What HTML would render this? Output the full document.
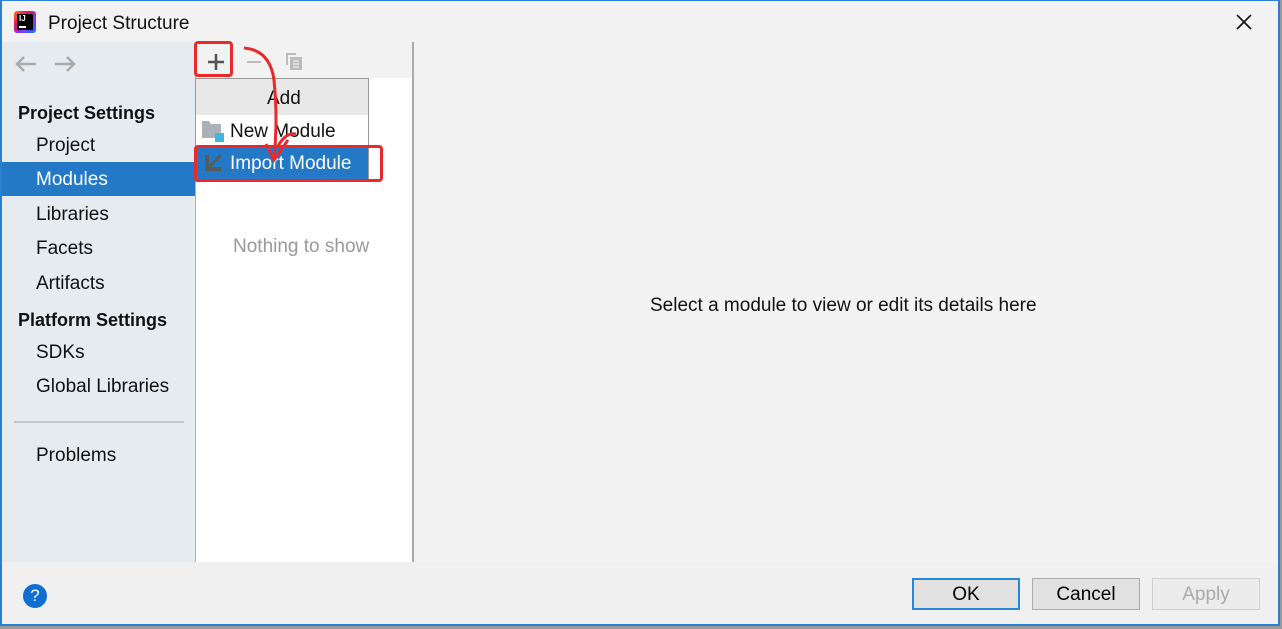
<!DOCTYPE html>
<html><head><style>
*{margin:0;padding:0;box-sizing:border-box}
body{width:1282px;height:629px;background:#9a9a9a;font-family:"Liberation Sans",sans-serif;position:relative;overflow:hidden}
#win{position:absolute;left:0;top:0;width:1280px;height:626px;background:#f2f2f2}
.a{position:absolute}
.t{font-size:19px;color:#111;white-space:nowrap;margin-top:1px}
.b{font-weight:bold;font-size:18px}
</style></head><body>
<div id="win">
 <div class="a" style="left:14px;top:11px;width:22px;height:22px">
  <div class="a" style="left:0;top:0;width:22px;height:22px;background:linear-gradient(135deg,#f97a12,#e3145c,#7b3cf2,#087cfa);border-radius:3px"></div>
  <div class="a" style="left:3px;top:3px;width:16px;height:16px;background:#000"></div>
  <div class="a" style="left:5px;top:3px;color:#fff;font-size:8px;font-weight:bold">IJ</div>
  <div class="a" style="left:5px;top:15px;width:7px;height:2px;background:#fff"></div>
 </div>
 <div class="a t" style="left:48px;top:12px">Project Structure</div>
 <svg class="a" style="left:1236px;top:14px" width="16" height="16"><path d="M1 1L15 15M15 1L1 15" stroke="#111" stroke-width="1.6"/></svg>

 <div class="a" style="left:2px;top:42px;width:193px;height:520px;background:#e6ebf0"></div>
 <svg class="a" style="left:15px;top:56px" width="22" height="16"><path d="M21 8H2M9 1L2 8L9 15" stroke="#aaa" stroke-width="2.4" fill="none"/></svg>
 <svg class="a" style="left:54px;top:56px" width="22" height="16"><path d="M1 8H20M13 1L20 8L13 15" stroke="#aaa" stroke-width="2.4" fill="none"/></svg>
 <div class="a t b" style="left:18px;top:102px">Project Settings</div>
 <div class="a t" style="left:36px;top:134px">Project</div>
 <div class="a" style="left:2px;top:162px;width:193px;height:34px;background:#2379c6"></div>
 <div class="a t" style="left:36px;top:168px;color:#fff">Modules</div>
 <div class="a t" style="left:36px;top:203px">Libraries</div>
 <div class="a t" style="left:36px;top:237px">Facets</div>
 <div class="a t" style="left:36px;top:272px">Artifacts</div>
 <div class="a t b" style="left:18px;top:309px">Platform Settings</div>
 <div class="a t" style="left:36px;top:341px">SDKs</div>
 <div class="a t" style="left:36px;top:375px">Global Libraries</div>
 <div class="a" style="left:14px;top:421px;width:170px;height:2px;background:#c4c6c8"></div>
 <div class="a t" style="left:36px;top:444px">Problems</div>

 <div class="a" style="left:195px;top:42px;width:1px;height:520px;background:#b0b0b0"></div>
 <div class="a" style="left:196px;top:78px;width:216px;height:484px;background:#fff"></div>
 <div class="a" style="left:412px;top:42px;width:2px;height:520px;background:#aaa"></div>
 <svg class="a" style="left:207px;top:53px" width="18" height="18"><path d="M9 1V17M1 9H17" stroke="#555" stroke-width="2.6"/></svg>
 <div class="a" style="left:247px;top:61px;width:14px;height:2px;background:#bbb"></div>
 <svg class="a" style="left:284px;top:51px" width="20" height="20"><path d="M2 2H12V4H4V14H2Z" fill="#bbb"/><path d="M6 6H18V19H6Z" fill="#bbb"/><path d="M9 10H15M9 13H15M9 16H15" stroke="#eee" stroke-width="1.3"/></svg>
 <div class="a" style="left:194px;top:41px;width:39px;height:36px;border:3px solid #ea2a2a;border-radius:4px"></div>

 <div class="a" style="left:195px;top:78px;width:174px;height:104px;border:1px solid #999;background:#fff"></div>
 <div class="a" style="left:196px;top:79px;width:172px;height:36px;background:#e8e8e8"></div>
 <div class="a t" style="left:267px;top:87px">Add</div>
 <svg class="a" style="left:201px;top:120px" width="24" height="24"><path d="M1 1H8L10 4H20V18H1Z" fill="#aab2b9"/><rect x="14" y="13" width="9" height="9" fill="#40b6e0"/></svg>
 <div class="a t" style="left:230px;top:120px">New Module</div>
 <div class="a" style="left:196px;top:147px;width:172px;height:33px;background:#2379c6"></div>
 <svg class="a" style="left:202px;top:152px" width="22" height="22"><path d="M3 3V19H19V15H7V3Z" fill="#5a5a5a"/><path d="M8 14L19 3" stroke="#5a5a5a" stroke-width="3"/></svg>
 <div class="a t" style="left:230px;top:152px;color:#fff">Import Module</div>
 <div class="a" style="left:194px;top:145px;width:189px;height:37px;border:3px solid #ea2a2a;border-radius:4px"></div>
 <svg class="a" style="left:230px;top:40px" width="80" height="130"><path d="M14 8 Q40 10 44 40 Q48 80 44 118 M36 104 L44 120 L58 100 M48 106 Q56 92 66 94" stroke="#ea2a2a" stroke-width="3" fill="none"/></svg>

 <div class="a" style="left:233px;top:236px;font-size:19px;color:#999">Nothing to show</div>
 <div class="a t" style="left:650px;top:294px">Select a module to view or edit its details here</div>

 <div class="a" style="left:2px;top:562px;width:1276px;height:62px;background:#f0f0f0"></div>
 <div class="a" style="left:23px;top:584px;width:24px;height:24px;border-radius:50%;background:#0f6fd0;color:#fff;font-size:17px;text-align:center;line-height:24px">?</div>
 <div class="a" style="left:912px;top:578px;width:108px;height:32px;border:2px solid #2a86d8;background:#e1e1e1;font-size:19px;text-align:center;line-height:29px">OK</div>
 <div class="a" style="left:1032px;top:578px;width:108px;height:32px;border:1px solid #adadad;background:#e1e1e1;font-size:19px;text-align:center;line-height:31px">Cancel</div>
 <div class="a" style="left:1152px;top:578px;width:108px;height:32px;border:1px solid #d0d0d0;background:#ececec;color:#aaa;font-size:19px;text-align:center;line-height:31px">Apply</div>

 <div class="a" style="left:0;top:0;width:1280px;height:1px;background:#2b7fd0"></div>
 <div class="a" style="left:0;top:0;width:2px;height:626px;background:#2b7fd0"></div>
 <div class="a" style="left:1278px;top:0;width:2px;height:626px;background:#2b7fd0"></div>
 <div class="a" style="left:0;top:624px;width:1280px;height:2px;background:#2b7fd0"></div>
</div>
</body></html>
